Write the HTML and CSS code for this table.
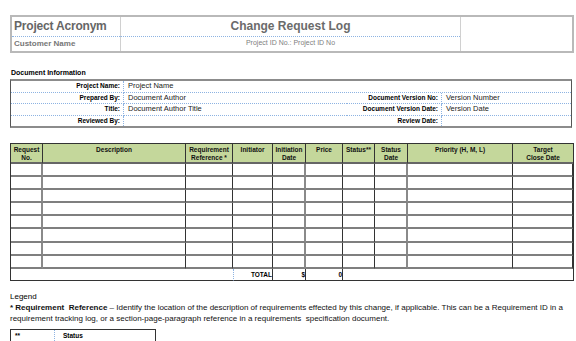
FILE: index.html
```html
<!DOCTYPE html>
<html>
<head>
<meta charset="utf-8">
<title>Change Request Log</title>
<link rel="stylesheet" href="styles.css">
</head>
<body>
<div class="page">
  <div class="hdr">
    <div class="hdr-acr">Project Acronym</div>
    <div class="hdr-title">Change Request Log</div>
    <div class="hdr-logo"></div>
    <div class="hdr-cust">Customer Name</div>
    <div class="hdr-pid">Project ID No.: Project ID No</div>
  </div>

  <div class="sec-title">Document Information</div>
  <table class="doc">
    <colgroup><col class="c-l1"><col class="c-v1"><col class="c-l2"><col class="c-v2"></colgroup>
    <tr><td class="lbl">Project Name:</td><td class="val" colspan="3">Project Name</td></tr>
    <tr><td class="lbl">Prepared By:</td><td class="val">Document Author</td><td class="lbl">Document Version No:</td><td class="val">Version Number</td></tr>
    <tr><td class="lbl">Title:</td><td class="val">Document Author Title</td><td class="lbl">Document Version Date:</td><td class="val">Version Date</td></tr>
    <tr class="last"><td class="lbl">Reviewed By:</td><td class="val"></td><td class="lbl">Review Date:</td><td class="val"></td></tr>
  </table>

  <table class="log">
    <colgroup>
      <col class="w32"><col class="w143"><col class="w47"><col class="w40"><col class="w33">
      <col class="w37"><col class="w32"><col class="w33"><col class="w105"><col class="w60">
    </colgroup>
    <tr class="head">
      <th>Request<br>No.</th><th>Description</th><th>Requirement<br>Reference *</th><th>Initiator</th><th>Initiation<br>Date</th>
      <th>Price</th><th>Status**</th><th>Status<br>Date</th><th>Priority (H, M, L)</th><th>Target<br>Close Date</th>
    </tr>
    <tr class="row"><td class="thick"></td><td></td><td></td><td></td><td class="thick"></td><td></td><td></td><td class="thick"></td><td></td><td></td></tr>
    <tr class="row"><td class="thick"></td><td></td><td></td><td></td><td class="thick"></td><td></td><td></td><td class="thick"></td><td></td><td></td></tr>
    <tr class="row"><td class="thick"></td><td></td><td></td><td></td><td class="thick"></td><td></td><td></td><td class="thick"></td><td></td><td></td></tr>
    <tr class="row"><td class="thick"></td><td></td><td></td><td></td><td class="thick"></td><td></td><td></td><td class="thick"></td><td></td><td></td></tr>
    <tr class="row"><td class="thick"></td><td></td><td></td><td></td><td class="thick"></td><td></td><td></td><td class="thick"></td><td></td><td></td></tr>
    <tr class="row"><td class="thick"></td><td></td><td></td><td></td><td class="thick"></td><td></td><td></td><td class="thick"></td><td></td><td></td></tr>
    <tr class="row"><td class="thick"></td><td></td><td></td><td></td><td class="thick"></td><td></td><td></td><td class="thick"></td><td></td><td></td></tr>
    <tr class="row"><td class="thick"></td><td></td><td></td><td></td><td class="thick"></td><td></td><td></td><td class="thick"></td><td></td><td></td></tr>
    <tr class="total">
      <td colspan="3" class="blank"></td><td class="tot-lbl">TOTAL</td><td class="num">$</td><td class="num">0</td><td colspan="4" class="blank"></td>
    </tr>
  </table>

  <div class="legend-h">Legend</div>
  <p class="legend-p"><b>* Requirement&nbsp; Reference</b> &ndash; Identify the location of the description of requirements effected by this change, if applicable. This can be a Requirement ID in a<br>requirement tracking log, or a section-page-paragraph reference in a requirements&nbsp; specification document.</p>

  <table class="status">
    <colgroup><col class="s1"><col class="s2"></colgroup>
    <tr><td class="s-key">**</td><td class="s-name">Status</td></tr>
  </table>
</div>
</body>
</html>
```

FILE: styles.css
```css
* { box-sizing: border-box; }
html, body { margin: 0; padding: 0; background: #fff; }
body { font-family: "Liberation Sans", Arial, sans-serif; color: #000; }
.page { padding: 15px 0 0 10px; width: 576px; overflow: hidden; height: 341px; }

/* header box */
.hdr {
  width: 564px; height: 38px;
  border: 2px solid #b9b9b9;
  display: grid;
  grid-template-columns: 108px 340px 1fr;
  grid-template-rows: 20px 14px;
}
.hdr-acr {
  font-weight: bold; font-size: 12px; color: #666;
  padding-left: 2px; line-height: 19px; letter-spacing: -0.2px;
  border-bottom: 1px dotted #8db3e2;
  white-space: nowrap;
}
.hdr-title {
  font-weight: bold; font-size: 12px; color: #6b6b6b;
  text-align: center; line-height: 19px;
  border-left: 1px solid #d0d0d0;
  border-bottom: 1px dotted #8db3e2;
}
.hdr-logo { grid-row: 1 / span 2; grid-column: 3; border-left: 1px solid #d0d0d0; }
.hdr-cust {
  font-weight: bold; font-size: 8px; color: #777;
  padding-left: 2px; line-height: 14px;
}
.hdr-pid {
  font-size: 7px; color: #808080; text-align: center; line-height: 12px;
  border-left: 1px solid #d0d0d0;
}

/* document information */
.sec-title {
  margin-top: 15px; font-weight: bold; font-size: 7px; line-height: 10px;
  margin-bottom: 1px; padding-left: 1px;
}
table { border-collapse: separate; border-spacing: 0; table-layout: fixed; }
.doc {
  width: 562px;
  border-top: 2px solid #8c8c8c; border-bottom: 2px solid #8c8c8c;
  border-left: 1px solid #555; border-right: 1px solid #555;
}
.c-l1 { width: 113px; } .c-v1 { width: 223px; } .c-l2 { width: 95px; } .c-v2 { width: 129px; }
.doc td {
  height: 11.5px; padding: 0; line-height: 10px;
  border-bottom: 1px dotted #8db3e2; white-space: nowrap; overflow: hidden;
}
.doc tr.last td { border-bottom: 0; height: 10.5px; }
.doc .lbl {
  font-weight: bold; font-size: 6.5px; text-align: right; padding-right: 3px;
  border-right: 1px dotted #8db3e2;
}
.doc .val { font-size: 7.5px; padding-left: 4px; color: #222; }

/* log table */
.log {
  margin-top: 15px; width: 562px;
  border-top: 1px solid #333; border-left: 1px solid #333; border-right: 1px solid #333;
}
.w32 { width: 32px; } .w143 { width: 143px; } .w47 { width: 47px; } .w40 { width: 40px; }
.w33 { width: 33px; } .w37 { width: 37px; } .w105 { width: 105px; } .w60 { width: 60px; }
.log th {
  background: #c4d79b; font-size: 6.5px; font-weight: bold; line-height: 7.5px;
  vertical-align: top; text-align: center; padding: 2px 0 0;
  height: 20px; border-right: 1px solid #333; border-bottom: 2px solid #666;
  color: #111;
}
.log th:last-child, .log td:last-child { border-right: 0; }
.log tr.row td {
  height: 13.1px; padding: 0;
  border-right: 1px solid #333; border-bottom: 2px solid #7f7f7f;
}
.log tr.row td.thick { border-right: 2px solid #8a8a8a; }
.log tr.total td {
  height: 12.5px; padding: 0; font-size: 6.5px; line-height: 10px;
  border-bottom: 1px solid #333; vertical-align: middle;
}
.log .tot-lbl {
  font-weight: bold; text-align: right; padding-right: 1px;
  border-left: 1px dotted #8db3e2; border-right: 1px solid #333;
}
.log .num { text-align: right; padding-right: 2px; border-right: 1px solid #333; font-weight: bold; }

/* legend */
.legend-h { margin-top: 11px; font-size: 8px; line-height: 10px; }
.legend-p {
  margin: 0; font-size: 8px; line-height: 11px; color: #111; white-space: nowrap;
}
.status {
  margin-top: 5px; width: 146px;
  border-top: 1px solid #333; border-left: 1px solid #333; border-right: 1px solid #333;
}
.s1 { width: 44px; } .s2 { width: 100px; }
.status td { height: 11px; font-size: 6.5px; font-weight: bold; padding: 0 0 0 4px; line-height: 10px; }
.status .s-key { border-right: 1px dotted #8db3e2; }
.status .s-name { padding-left: 8px; }
```
